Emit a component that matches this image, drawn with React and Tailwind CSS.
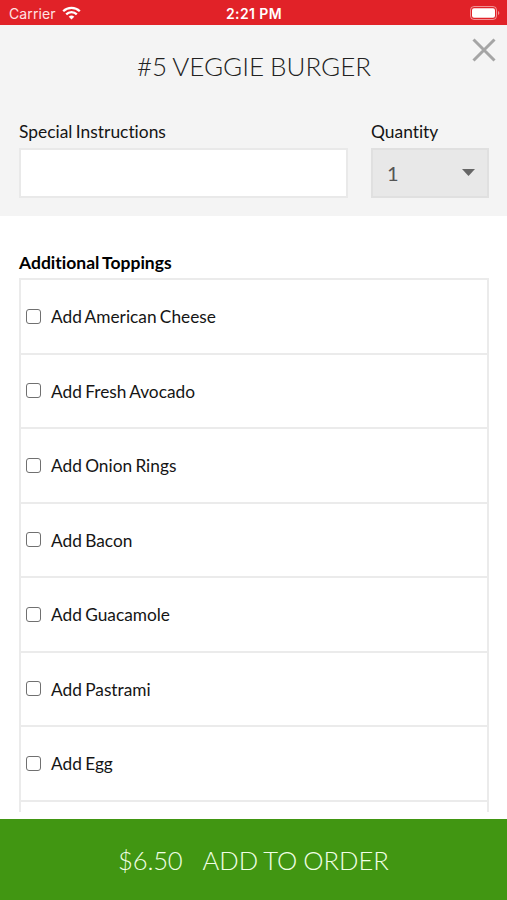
import { useState } from "react";

const TOPPINGS = [
  "Add American Cheese",
  "Add Fresh Avocado",
  "Add Onion Rings",
  "Add Bacon",
  "Add Guacamole",
  "Add Pastrami",
  "Add Egg",
];

function StatusBar() {
  return (
    <div className="grid h-[25px] shrink-0 grid-cols-3 items-center bg-[#e12228] pt-[3px] pr-[7px] pl-[9px] font-[Inter,sans-serif] text-[14px] leading-none text-white">
      <div className="flex items-center gap-[6px]">
        <span className="tracking-[0.1px] text-[#ffe3e3]">Carrier</span>
        <svg width="19" height="14" viewBox="0 0 19 14" fill="none" stroke="white" strokeWidth="2.3" className="-mt-[2px]">
          <path d="M1.2 5.2a11.8 11.8 0 0 1 16.6 0" />
          <path d="M4.2 8.4a7.5 7.5 0 0 1 10.6 0" />
          <path d="M9.5 13.6 6.7 10.8a4 4 0 0 1 5.6 0Z" fill="white" stroke="none" />
        </svg>
      </div>
      <span className="-ml-px pb-px text-center text-[14px] font-semibold tracking-[0.4px]">2:21 PM</span>
      <svg width="30" height="14" viewBox="0 0 30 14" className="-mt-[3px] justify-self-end">
        <rect x="0.5" y="0.5" width="26" height="13" rx="3.5" fill="none" stroke="white" strokeOpacity="0.5" />
        <rect x="2" y="2.3" width="23" height="9.4" rx="2" fill="white" />
        <path d="M28 5v4c1.8-.7 1.8-3.3 0-4Z" fill="white" fillOpacity="0.5" />
      </svg>
    </div>
  );
}

function ToppingRow({ label, checked, onChange }) {
  return (
    <label className="flex h-[74.5px] shrink-0 items-center border-b-2 border-[#ebebeb] pl-[5px] text-[17.3px] [word-spacing:-1.1px]">
      <input
        type="checkbox"
        checked={checked}
        onChange={onChange}
        className="mr-[11px] size-[15px] appearance-none rounded-[3px] border border-[#707070] bg-white checked:bg-[#419612]"
      />
      <span className="-ml-px pt-[2px]">{label}</span>
    </label>
  );
}

export default function App() {
  const [instructions, setInstructions] = useState("");
  const [quantity, setQuantity] = useState("1");
  const [selected, setSelected] = useState([]);

  const toggle = (name) => {
    setSelected(
      selected.includes(name)
        ? selected.filter((item) => item !== name)
        : [...selected, name]
    );
  };

  return (
    <div className="flex h-[900px] w-full flex-col overflow-hidden bg-white font-[Lato,sans-serif] text-[#151515] [font-variant-ligatures:none]">
      <StatusBar />

      <header className="relative h-[191px] shrink-0 bg-[#f4f4f4] pt-[25px] pr-[18px] pl-[19px]">
        <h1 className="text-center text-[26px] leading-[32px] font-light text-[#222] [word-spacing:-1px]">
          #5 VEGGIE BURGER
        </h1>
        <button aria-label="Close" className="absolute top-[13px] right-[11px]">
          <svg width="24" height="24" viewBox="0 0 24 24" stroke="#a5a5a5" strokeWidth="3">
            <path d="M1.5 1.5 22.5 22.5M22.5 1.5 1.5 22.5" />
          </svg>
        </button>

        <div className="mt-[38px] flex gap-[23px] text-[17.4px] leading-[24px]">
          <label className="block w-[329px] [word-spacing:-1px]">
            Special Instructions
            <input
              type="text"
              value={instructions}
              onChange={(e) => setInstructions(e.target.value)}
              className="mt-[4px] block h-[50px] w-full border-2 border-[#e9e9e9] bg-white px-4 focus:outline-none"
            />
          </label>
          <label className="block w-[118px]">
            Quantity
            <span className="relative mt-[4px] block">
              <select
                value={quantity}
                onChange={(e) => setQuantity(e.target.value)}
                className="h-[50px] w-full appearance-none border-2 border-[#e0e0e0] bg-[#e8e8e8] pl-[14px] text-[20px] text-[#555] focus:outline-none"
              >
                <option>1</option>
                <option>2</option>
                <option>3</option>
              </select>
              <svg width="13" height="7" viewBox="0 0 13 7" className="pointer-events-none absolute top-[21px] right-[14px]">
                <path d="M0 0h13L6.5 7Z" fill="#666" />
              </svg>
            </span>
          </label>
        </div>
      </header>

      <main className="flex h-[596px] shrink-0 flex-col overflow-hidden pt-[35px] pr-[18px] pl-[19px]">
        <h2 className="mb-[3px] text-[17.5px] leading-[24px] font-bold text-black [word-spacing:-1px]">
          Additional Toppings
        </h2>
        <div className="flex min-h-0 flex-1 flex-col border-2 border-b-0 border-[#ebebeb]">
          {TOPPINGS.map((name) => (
            <ToppingRow
              key={name}
              label={name}
              checked={selected.includes(name)}
              onChange={() => toggle(name)}
            />
          ))}
        </div>
      </main>

      <button className="mt-auto flex h-[81px] shrink-0 items-center justify-center gap-[20px] bg-[#419612] pt-[2px] text-[25.6px] font-light text-[#f0ffe4]">
        <span className="tracking-[-0.2px]">$6.50</span>
        <span className="[word-spacing:-1px]">ADD TO ORDER</span>
      </button>
    </div>
  );
}
